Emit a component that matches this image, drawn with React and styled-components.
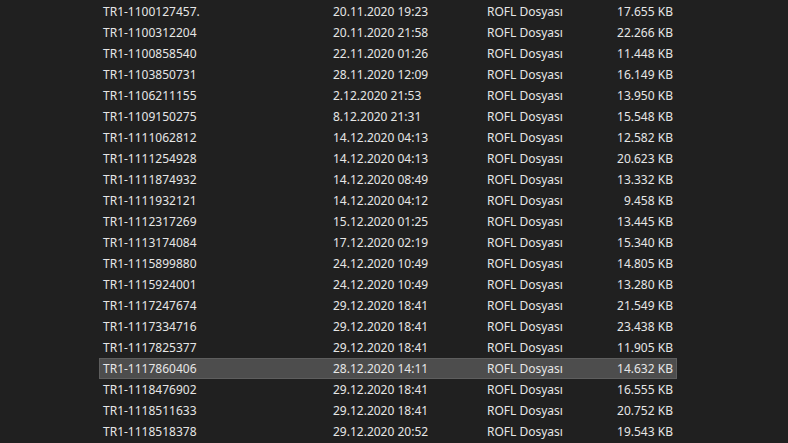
import React from 'react';
import styled, { createGlobalStyle } from 'styled-components';

const GlobalStyle = createGlobalStyle`
  html, body {
    margin: 0;
    padding: 0;
    background: #202020;
    overflow: hidden;
  }
`;

const Page = styled.div`
  width: 788px;
  height: 443px;
  background: #202020;
  padding: 1px 0 0 99px;
  box-sizing: border-box;
  font-family: "Noto Sans", "Open Sans", sans-serif;
  font-size: 12px;
  color: #e6e6e6;
`;

const List = styled.div`
  width: 578px;
  display: flex;
  flex-direction: column;
`;

const Row = styled.div`
  display: grid;
  grid-template-columns: 230px 154px 1fr 110px;
  align-items: center;
  height: 21px;
  box-sizing: border-box;
  padding: 0 9px 0 3px;
  background: ${({ selected }) => (selected ? '#4d4d4d' : 'transparent')};
  border: 1px solid ${({ selected }) => (selected ? '#5e5e5e' : 'transparent')};
  line-height: 19px;
  white-space: nowrap;
`;

const Cell = styled.span`
  text-align: ${({ right }) => (right ? 'right' : 'left')};
`;

const files = [
  ['TR1-1100127457.', '20.11.2020 19:23', '17.655 KB'],
  ['TR1-1100312204', '20.11.2020 21:58', '22.266 KB'],
  ['TR1-1100858540', '22.11.2020 01:26', '11.448 KB'],
  ['TR1-1103850731', '28.11.2020 12:09', '16.149 KB'],
  ['TR1-1106211155', '2.12.2020 21:53', '13.950 KB'],
  ['TR1-1109150275', '8.12.2020 21:31', '15.548 KB'],
  ['TR1-1111062812', '14.12.2020 04:13', '12.582 KB'],
  ['TR1-1111254928', '14.12.2020 04:13', '20.623 KB'],
  ['TR1-1111874932', '14.12.2020 08:49', '13.332 KB'],
  ['TR1-1111932121', '14.12.2020 04:12', '9.458 KB'],
  ['TR1-1112317269', '15.12.2020 01:25', '13.445 KB'],
  ['TR1-1113174084', '17.12.2020 02:19', '15.340 KB'],
  ['TR1-1115899880', '24.12.2020 10:49', '14.805 KB'],
  ['TR1-1115924001', '24.12.2020 10:49', '13.280 KB'],
  ['TR1-1117247674', '29.12.2020 18:41', '21.549 KB'],
  ['TR1-1117334716', '29.12.2020 18:41', '23.438 KB'],
  ['TR1-1117825377', '29.12.2020 18:41', '11.905 KB'],
  ['TR1-1117860406', '28.12.2020 14:11', '14.632 KB'],
  ['TR1-1118476902', '29.12.2020 18:41', '16.555 KB'],
  ['TR1-1118511633', '29.12.2020 18:41', '20.752 KB'],
  ['TR1-1118518378', '29.12.2020 20:52', '19.543 KB'],
];

const SELECTED = 'TR1-1117860406';

const App = () => (
  <>
    <GlobalStyle />
    <Page>
      <List>
        {files.map(([name, date, size]) => (
          <Row key={name} selected={name === SELECTED}>
            <Cell>{name}</Cell>
            <Cell>{date}</Cell>
            <Cell>ROFL Dosyası</Cell>
            <Cell right>{size}</Cell>
          </Row>
        ))}
      </List>
    </Page>
  </>
);

export default App;
